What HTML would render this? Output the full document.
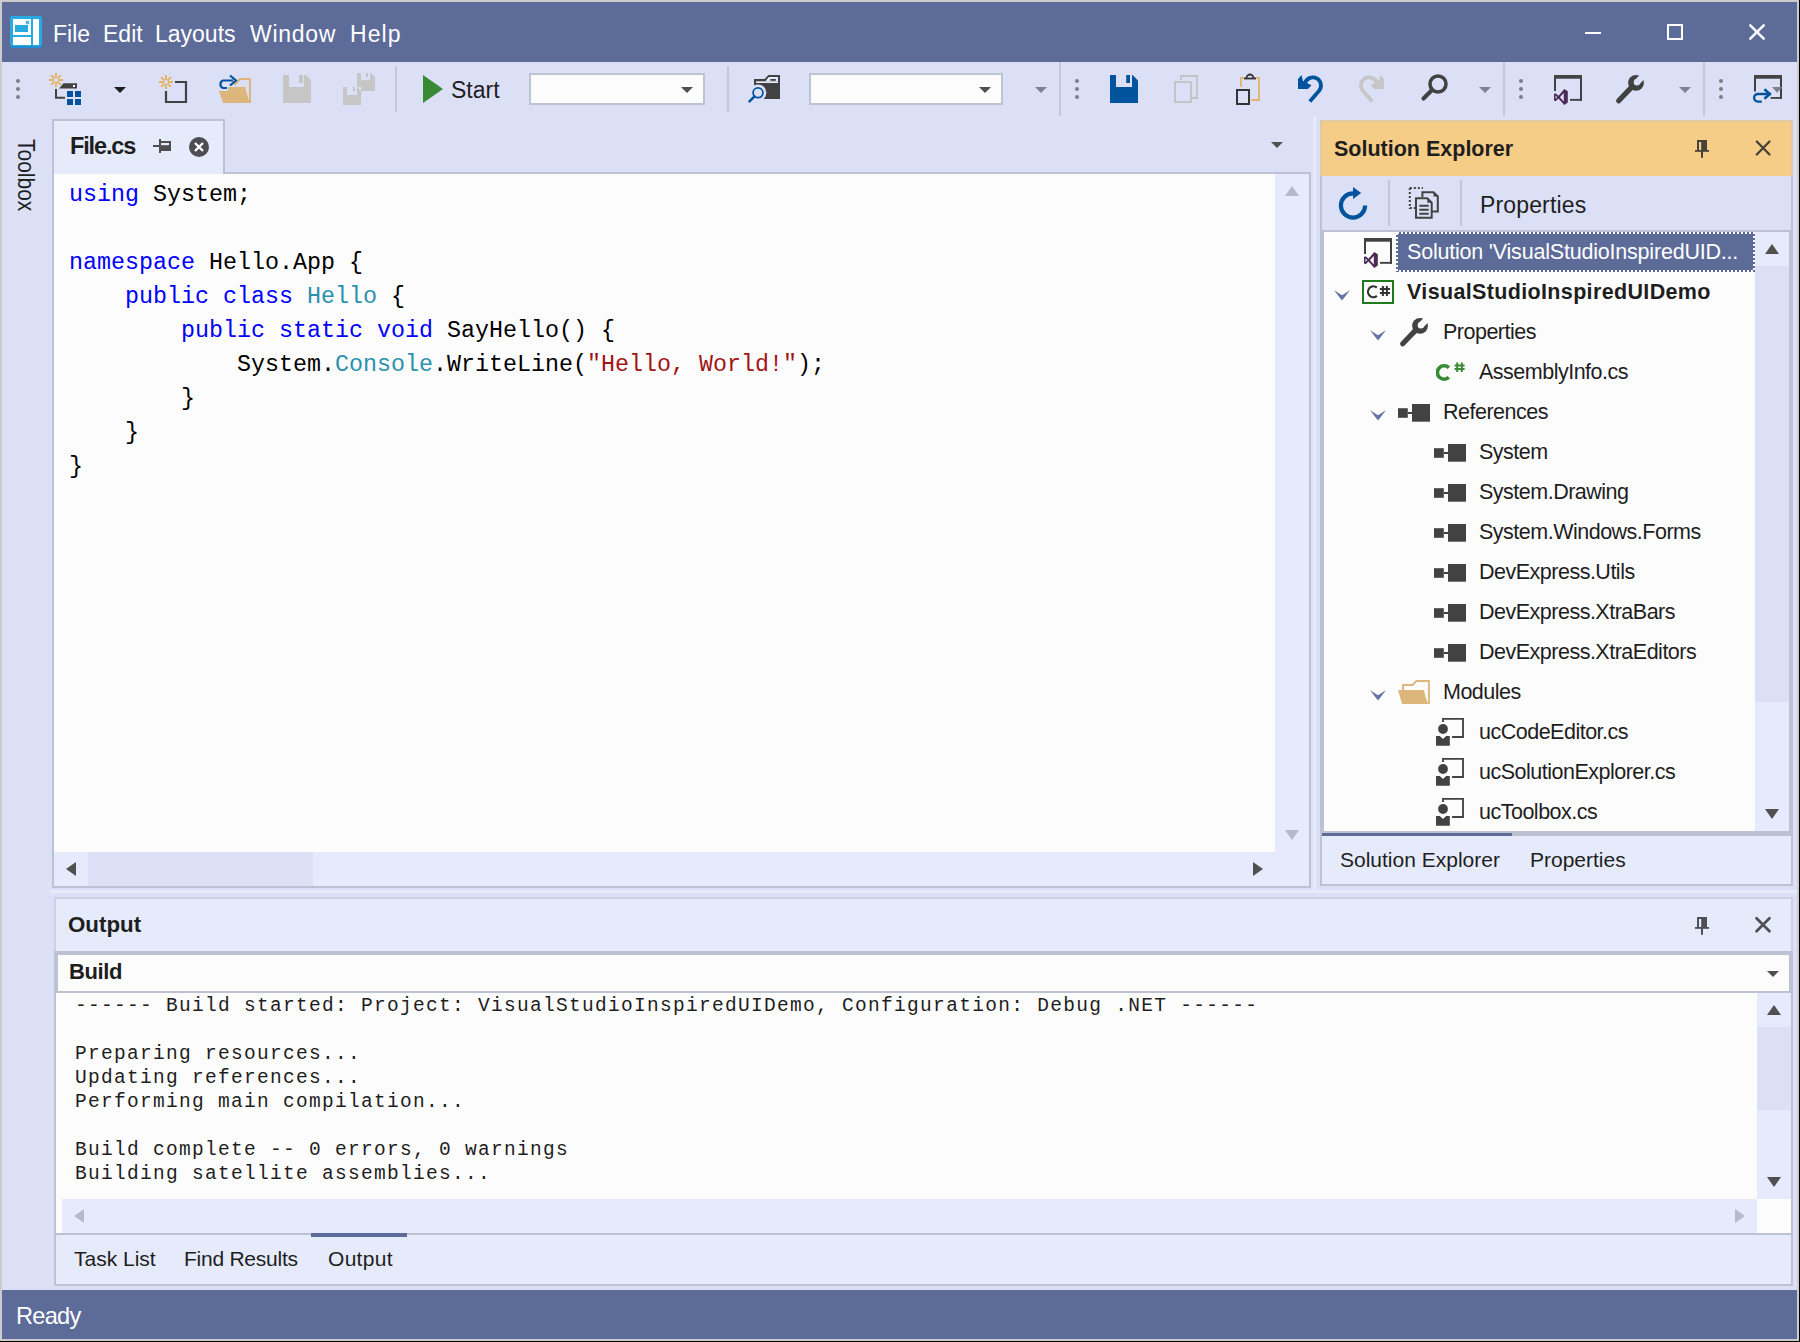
<!DOCTYPE html>
<html><head><meta charset="utf-8">
<style>
*{margin:0;padding:0;box-sizing:border-box}
html,body{width:1800px;height:1342px;overflow:hidden;background:#000}
body{position:relative;font-family:"Liberation Sans",sans-serif;color:#1e1e1e}
.a{position:absolute}
.t{position:absolute;white-space:pre;line-height:1}
#frame{left:0;top:0;width:1799px;height:1341px;background:#cbcbcb}
#win{left:2px;top:2px;width:1795px;height:1337px;background:#dce0f7}
#title{left:2px;top:2px;width:1795px;height:60px;background:#5d6b99}
.menu{color:#fff;font-size:23px;top:23px}
.sep{position:absolute;width:2px;background:#c2c7d6}
.dot{position:absolute;width:5px;height:5px;border-radius:50%;background:#7c7f88}
.combo{position:absolute;background:#fcfcfc;border:2px solid #bcc3d1}
.tri-d{position:absolute;width:0;height:0;border-left:6px solid transparent;border-right:6px solid transparent;border-top:6px solid #505050}
.border{background:#bcc2d2}
.code{font-family:"Liberation Mono",monospace;font-size:23.33px;color:#000}
.kw{color:#0000ff}.ty{color:#2b91af}.st{color:#a31515}
.out{font-family:"Liberation Mono",monospace;font-size:19.5px;letter-spacing:1.3px;color:#1e1e1e}
.tree{font-size:21.5px;letter-spacing:-0.5px;color:#1e1e1e}
</style></head><body>
<div id="frame" class="a"></div>
<div id="win" class="a"></div>
<div id="title" class="a"></div>

<!-- ============ TITLE BAR ============ -->
<svg class="a" style="left:10px;top:16px" width="32" height="32" viewBox="0 0 32 32">
  <rect x="0" y="0" width="32" height="32" rx="3" fill="#1f8ed0"/>
  <rect x="0" y="0" width="32" height="30" rx="3" fill="#29abe2"/>
  <rect x="3" y="3" width="18" height="16" fill="#fcfcfc"/>
  <rect x="5" y="9" width="13" height="7" fill="#29abe2"/>
  <rect x="3" y="21" width="18" height="8" fill="#fcfcfc"/>
  <rect x="23" y="3" width="6" height="26" fill="#fcfcfc"/>
  <path d="M16 5l3 3M19 5l-3 3" stroke="#29abe2" stroke-width="1.2"/>
</svg>
<div class="t menu" style="left:53px">File</div>
<div class="t menu" style="left:103px">Edit</div>
<div class="t menu" style="left:155px">Layouts</div>
<div class="t menu" style="left:250px;letter-spacing:0.7px">Window</div>
<div class="t menu" style="left:350px;letter-spacing:1.1px">Help</div>
<div class="a" style="left:1585px;top:32px;width:16px;height:2px;background:#fff"></div>
<div class="a" style="left:1667px;top:24px;width:16px;height:16px;border:2px solid #fff"></div>
<svg class="a" style="left:1747px;top:22px" width="20" height="20" viewBox="0 0 20 20"><path d="M3.3 3.3L16.7 16.7M16.7 3.3L3.3 16.7" stroke="#fff" stroke-width="2.5" stroke-linecap="round"/></svg>

<!-- ============ TOOLBAR ============ -->
<div class="a" style="left:16.0px;top:79.0px;width:4.2px;height:4.2px;border-radius:50%;background:#7c7f88"></div>
<div class="a" style="left:16.0px;top:87.0px;width:4.2px;height:4.2px;border-radius:50%;background:#7c7f88"></div>
<div class="a" style="left:16.0px;top:95.0px;width:4.2px;height:4.2px;border-radius:50%;background:#7c7f88"></div>
<svg class="a" style="left:0;top:0;overflow:visible" width="1800" height="120"><g stroke="#e3b467" stroke-width="2"><path d="M56 73V87M49 80H63M51.1 75.1L60.9 84.9M51.1 84.9L60.9 75.1"/></g><circle cx="56" cy="80" r="2" fill="#dce0f7"/><path d="M59 88.6L63.5 83.2H77V88.6z" fill="#424242"/><rect x="73" y="85" width="2" height="2" fill="#fff"/><path d="M56 89V97.8H65" fill="none" stroke="#424242" stroke-width="2"/><rect x="67" y="91" width="6" height="6" fill="#00539c"/><rect x="75" y="91" width="6" height="6" fill="#00539c"/><rect x="67" y="99" width="6" height="6" fill="#00539c"/><rect x="75" y="99" width="6" height="6" fill="#00539c"/><path d="M175 82H186V102H166V91" fill="none" stroke="#424242" stroke-width="2.2"/><g stroke="#e3b467" stroke-width="2"><path d="M166 75V89M159 82H173M161.1 77.1L170.9 86.9M161.1 86.9L170.9 77.1"/></g><circle cx="166" cy="82" r="2" fill="#dce0f7"/><path d="M234.5 85L240 79H250V103" fill="none" stroke="#dcb67a" stroke-width="2"/><path d="M219 91H228V87H245L249 101V103H223z" fill="#dcb67a"/><path d="M227 88H223A4 4 0 0 1 223 80.5H233" fill="none" stroke="#00539c" stroke-width="2.2"/><path d="M230 75.5L236 80.5L230 85.5" fill="none" stroke="#00539c" stroke-width="2.2"/><path d="M283 75H306L311 80V103H283z" fill="#c6c6c6"/><rect x="289" y="75" width="15" height="12" fill="#dce0f7"/><rect x="299" y="75" width="4" height="8" fill="#c6c6c6"/><path d="M357 73H371L375 77V91H361V87H357z" fill="#c6c6c6"/><rect x="361" y="73" width="9" height="7" fill="#dce0f7"/><rect x="366" y="73" width="2" height="4" fill="#c6c6c6"/><path d="M343 87H357L361 91V105H343z" fill="#c6c6c6"/><rect x="347" y="87" width="10" height="8" fill="#dce0f7"/><rect x="353" y="87" width="2" height="4" fill="#c6c6c6"/><path d="M423 75L443 89L423 103z" fill="#388a34"/><path d="M754 99V79H764.6L768.3 75H780V99z" fill="#424242"/><path d="M756 81.3H778V83H756z" fill="#e8ebfb"/><path d="M765.5 81.3L768.8 77H778V81.3z" fill="#e8ebfb"/><rect x="770.3" y="79" width="5.6" height="1.8" fill="#424242"/><circle cx="758" cy="92.8" r="8.4" fill="#dce0f7"/><rect x="746" y="99" width="10" height="8" fill="#dce0f7"/><circle cx="758" cy="92.8" r="4.9" fill="none" stroke="#00539c" stroke-width="1.8"/><path d="M754.5 96.3L749.5 101.3" stroke="#00539c" stroke-width="2.6" stroke-linecap="round"/><path d="M1110 75H1132.6L1138 80.4V103H1110z" fill="#00539c"/><rect x="1116" y="75" width="16" height="12" fill="#dce0f7"/><rect x="1126.2" y="75" width="3.8" height="8" fill="#00539c"/><path d="M1181 80V76H1197V98H1192" fill="none" stroke="#c3c3c3" stroke-width="1.8"/><rect x="1175" y="82" width="16" height="20" fill="none" stroke="#c3c3c3" stroke-width="1.8"/><path d="M1241 87V77.8H1245M1255 77.8H1259V100H1251" fill="none" stroke="#e3b467" stroke-width="1.8"/><path d="M1244 78.5H1256" stroke="#333" stroke-width="1.8"/><path d="M1246.5 78A3.5 3.5 0 0 1 1253.5 78" fill="none" stroke="#333" stroke-width="1.8"/><rect x="1237" y="90" width="12" height="14" fill="none" stroke="#333" stroke-width="2"/><path d="M1305.1 82.7A8.2 8.2 0 1 1 1319.1 90.8L1309.8 101.5" fill="none" stroke="#00539c" stroke-width="3.8"/><path d="M1298 79L1301.5 75L1303 81L1311.5 85.3L1308 89H1298z" fill="#00539c"/><path d="M1376.9 82.7A8.2 8.2 0 1 0 1362.9 90.8L1372.2 101.5" fill="none" stroke="#c6c6c6" stroke-width="3.8"/><path d="M1384 79L1380.5 75L1379 81L1370.5 85.3L1374 89H1384z" fill="#c6c6c6"/><circle cx="1438" cy="84" r="8" fill="none" stroke="#424242" stroke-width="3.6"/><path d="M1432 90L1423.5 98.5" stroke="#424242" stroke-width="4.2" stroke-linecap="round"/><g transform="translate(1548,71)"><rect x="6" y="4" width="28" height="3.7" fill="#424242"/><rect x="6" y="4" width="2" height="16" fill="#424242"/><rect x="32" y="4" width="2" height="25.8" fill="#424242"/><rect x="22" y="27.9" width="12" height="1.9" fill="#424242"/><path fill-rule="evenodd" fill="#4b2a59" d="M6 23L7.6 22.2L10.5 24.8L16.3 18L19.8 20.2V31.6L16.3 34L10.5 27.6L7.6 30.2L6 29.4Z M7.5 24.6L9.3 26.2L7.5 27.8Z M11.9 26.2L15.8 22V30.5Z"/></g><g transform="translate(1612,71)"><path d="M6.7 29.8L18.5 17.4" stroke="#424242" stroke-width="5.2" stroke-linecap="round"/><circle cx="24" cy="11.8" r="7.9" fill="#424242" mask="url(#wmask)"/></g><rect x="1754" y="75" width="28" height="3.7" fill="#424242"/><rect x="1754" y="75" width="2" height="16.5" fill="#424242"/><rect x="1780" y="75" width="2" height="23.8" fill="#424242"/><rect x="1770.6" y="97" width="11.4" height="1.8" fill="#424242"/><path d="M1772 87H1782.4L1777 92.8z" fill="#7f8290"/><path d="M1771 94H1757.9A3.8 3.8 0 0 0 1757.9 101.6H1761.8" fill="none" stroke="#00539c" stroke-width="2.3"/><path d="M1764.4 89.3L1769.8 94L1764.4 98.7" fill="none" stroke="#00539c" stroke-width="2.5"/></svg>
<div class="a" style="left:114px;top:87px;width:0;height:0;border-left:6.0px solid transparent;border-right:6.0px solid transparent;border-top:6px solid #1e1e1e"></div>
<div class="a" style="left:395px;top:66px;width:2px;height:46px;background:#c3c8d8"></div>
<div class="t" style="left:451px;top:79px;font-size:23px;color:#1e1e1e">Start</div>
<div class="combo" style="left:529px;top:73px;width:176px;height:32px"></div>
<div class="a" style="left:681px;top:87px;width:0;height:0;border-left:6.0px solid transparent;border-right:6.0px solid transparent;border-top:6px solid #505050"></div>
<div class="a" style="left:727px;top:66px;width:2px;height:46px;background:#c3c8d8"></div>
<div class="combo" style="left:809px;top:73px;width:194px;height:32px"></div>
<div class="a" style="left:979px;top:87px;width:0;height:0;border-left:6.0px solid transparent;border-right:6.0px solid transparent;border-top:6px solid #505050"></div>
<div class="a" style="left:1035px;top:87px;width:0;height:0;border-left:6.0px solid transparent;border-right:6.0px solid transparent;border-top:6px solid #7f8290"></div>
<div class="a" style="left:1059px;top:62px;width:2px;height:54px;background:#c3c8d8"></div>
<div class="a" style="left:1075.0px;top:79.0px;width:4.2px;height:4.2px;border-radius:50%;background:#7c7f88"></div>
<div class="a" style="left:1075.0px;top:87.0px;width:4.2px;height:4.2px;border-radius:50%;background:#7c7f88"></div>
<div class="a" style="left:1075.0px;top:95.0px;width:4.2px;height:4.2px;border-radius:50%;background:#7c7f88"></div>
<div class="a" style="left:1479px;top:87px;width:0;height:0;border-left:6.0px solid transparent;border-right:6.0px solid transparent;border-top:6px solid #7f8290"></div>
<div class="a" style="left:1503px;top:62px;width:2px;height:54px;background:#c3c8d8"></div>
<div class="a" style="left:1519.0px;top:79.0px;width:4.2px;height:4.2px;border-radius:50%;background:#7c7f88"></div>
<div class="a" style="left:1519.0px;top:87.0px;width:4.2px;height:4.2px;border-radius:50%;background:#7c7f88"></div>
<div class="a" style="left:1519.0px;top:95.0px;width:4.2px;height:4.2px;border-radius:50%;background:#7c7f88"></div>
<div class="a" style="left:1679px;top:87px;width:0;height:0;border-left:6.0px solid transparent;border-right:6.0px solid transparent;border-top:6px solid #7f8290"></div>
<div class="a" style="left:1703px;top:62px;width:2px;height:54px;background:#c3c8d8"></div>
<div class="a" style="left:1719.0px;top:79.0px;width:4.2px;height:4.2px;border-radius:50%;background:#7c7f88"></div>
<div class="a" style="left:1719.0px;top:87.0px;width:4.2px;height:4.2px;border-radius:50%;background:#7c7f88"></div>
<div class="a" style="left:1719.0px;top:95.0px;width:4.2px;height:4.2px;border-radius:50%;background:#7c7f88"></div>

<!-- ============ TOOLBOX ============ -->
<div class="t" style="left:15px;top:139px;font-size:23.2px;color:#1e1e1e;transform-origin:0 0;transform:translate(22px,0) rotate(90deg) scaleX(0.905)">Toolbox</div>

<!-- ============ DOCUMENT TAB + EDITOR ============ -->
<div class="a border" style="left:52px;top:172px;width:1259px;height:716px"></div>
<div class="a" style="left:54px;top:174px;width:1221px;height:678px;background:#fcfcfc"></div>
<div class="a border" style="left:52px;top:119px;width:173px;height:55px"></div>
<div class="a" style="left:54px;top:121px;width:169px;height:53px;background:#e6ebfc"></div>
<div class="t" style="left:70px;top:135px;font-size:23.5px;letter-spacing:-1.15px;font-weight:bold;color:#1e1e1e">File.cs</div>
<svg class="a" style="left:150px;top:136px" width="62" height="24" viewBox="150 136 62 24"><path d="M153 146H160" stroke="#4d4d52" stroke-width="2"/><rect x="159" y="139" width="2" height="14" fill="#4d4d52"/><rect x="161" y="141" width="10" height="10" fill="#4d4d52"/><rect x="161" y="143" width="8" height="2.2" fill="#e6ebfc"/><circle cx="199" cy="147" r="10" fill="#4d4d52"/><path d="M195 143L203 151M203 143L195 151" stroke="#fff" stroke-width="2.4"/></svg>

<div class="a" style="left:1275px;top:174px;width:34px;height:678px;background:#e6eafc"></div>
<div class="a" style="left:54px;top:852px;width:1221px;height:34px;background:#e6eafc"></div>
<div class="a" style="left:88px;top:852px;width:225px;height:34px;background:#dce0f7"></div>
<div class="a" style="left:1275px;top:852px;width:34px;height:34px;background:#e6eafc"></div>

<div class="a code" style="left:69px;top:178px;line-height:34px;white-space:pre"><span class="kw">using</span> System;

<span class="kw">namespace</span> Hello.App {
    <span class="kw">public</span> <span class="kw">class</span> <span class="ty">Hello</span> {
        <span class="kw">public</span> <span class="kw">static</span> <span class="kw">void</span> SayHello() {
            System.<span class="ty">Console</span>.WriteLine(<span class="st">"Hello, World!"</span>);
        }
    }
}</div>
<div class="a" style="left:1285px;top:186px;width:0;height:0;border-left:7px solid transparent;border-right:7px solid transparent;border-bottom:10px solid #b5bac8"></div>
<div class="a" style="left:1285px;top:830px;width:0;height:0;border-left:7px solid transparent;border-right:7px solid transparent;border-top:10px solid #b5bac8"></div>
<div class="a" style="left:66px;top:862px;width:0;height:0;border-top:7px solid transparent;border-bottom:7px solid transparent;border-right:10px solid #505050"></div>
<div class="a" style="left:1253px;top:862px;width:0;height:0;border-top:7px solid transparent;border-bottom:7px solid transparent;border-left:10px solid #505050"></div>
<div class="tri-d" style="left:1271px;top:142px"></div>


<!-- ============ SOLUTION EXPLORER ============ -->
<svg width="0" height="0" style="position:absolute"><defs><mask id="wmask" maskUnits="userSpaceOnUse" x="0" y="0" width="36" height="36"><rect x="0" y="0" width="36" height="36" fill="#fff"/><circle cx="24.9" cy="11.3" r="3.2" fill="#000"/><path d="M24.9 11.3L33 3.2" stroke="#000" stroke-width="6.2"/></mask></defs></svg>
<div class="a" style="left:1320px;top:120px;width:473px;height:766px;background:#bcc2d2"></div>
<div class="a" style="left:1320px;top:120px;width:473px;height:56px;background:#e3c9a3"></div>
<div class="a" style="left:1322px;top:122px;width:469px;height:54px;background:#f5cd86"></div>
<div class="t" style="left:1334px;top:139px;font-size:21.5px;font-weight:bold;color:#1e1e1e">Solution Explorer</div>
<svg class="a" style="left:1690px;top:136px" width="90" height="26" viewBox="1690 136 90 26"><path d="M1697 140H1707V150.2H1697Z" fill="#46413a"/><rect x="1699" y="142" width="2.2" height="8.2" fill="#f5cd86"/><rect x="1695" y="150" width="14" height="1.8" fill="#46413a"/><rect x="1701" y="151" width="2" height="6.8" fill="#46413a"/><path d="M1756.8 141.5L1769.5 154.5M1769.5 141.5L1756.8 154.5" stroke="#46413a" stroke-width="2.3" stroke-linecap="round"/></svg>
<div class="a" style="left:1322px;top:176px;width:469px;height:54px;background:#dce0f7"></div>
<div class="sep" style="left:1388px;top:180px;height:46px"></div>
<div class="sep" style="left:1460px;top:180px;height:46px"></div>
<svg class="a" style="left:1334px;top:182px" width="40" height="44" viewBox="1334 182 40 44"><path d="M1353 193.4A12.1 12.1 0 1 0 1365.1 205.5" fill="none" stroke="#00539c" stroke-width="4.2"/><path d="M1353 187L1361.2 193L1353 199z" fill="#00539c"/></svg>
<svg class="a" style="left:1404px;top:182px" width="40" height="44" viewBox="1404 182 40 44"><path d="M1409.8 188H1423M1409.8 188V209M1409.8 208H1415" fill="none" stroke="#424242" stroke-width="2" stroke-dasharray="2 2"/><path d="M1422.4 197V192.2H1433.5L1437.8 196.5V211.6H1432" fill="none" stroke="#424242" stroke-width="2"/><path d="M1433.5 192.2L1437.8 196.5H1433.5z" fill="#424242"/><path d="M1416 198.3H1427.3L1431.7 202.7V217.7H1416Z" fill="#dce0f7" stroke="#424242" stroke-width="2"/><path d="M1427.3 198.3L1431.7 202.7H1427.3z" fill="#424242"/><path d="M1419.3 205.8H1428.7M1419.3 209.8H1428.7M1419.3 213.8H1428.7" stroke="#424242" stroke-width="2"/></svg>
<div class="t" style="left:1480px;top:194px;font-size:23px;letter-spacing:0.15px;color:#1e1e1e">Properties</div>
<div class="a" style="left:1324px;top:232px;width:431px;height:599px;background:#fcfcfc"></div>
<div class="a" style="left:1755px;top:232px;width:34px;height:599px;background:#e6eafc"></div>
<div class="a" style="left:1755px;top:266px;width:34px;height:436px;background:#dce0f7"></div>
<div class="a" style="left:1765px;top:244px;width:0;height:0;border-left:7px solid transparent;border-right:7px solid transparent;border-bottom:10px solid #505050"></div>
<div class="a" style="left:1765px;top:809px;width:0;height:0;border-left:7px solid transparent;border-right:7px solid transparent;border-top:10px solid #505050"></div>
<svg class="a" style="left:1396px;top:232px" width="359" height="40" viewBox="0 0 359 40"><rect x="0" y="0" width="359" height="40" fill="#5d6b99"/><rect x="1" y="1" width="357" height="38" fill="none" stroke="#fff" stroke-width="2" stroke-dasharray="2 2"/></svg>
<svg class="a" style="left:1358px;top:234px" width="40" height="40" viewBox="0 0 40 40"><rect x="6" y="4" width="28" height="3.7" fill="#424242"/><rect x="6" y="4" width="2" height="16" fill="#424242"/><rect x="32" y="4" width="2" height="25.8" fill="#424242"/><rect x="22" y="27.9" width="12" height="1.9" fill="#424242"/><path fill-rule="evenodd" fill="#4b2a59" d="M6 23L7.6 22.2L10.5 24.8L16.3 18L19.8 20.2V31.6L16.3 34L10.5 27.6L7.6 30.2L6 29.4Z M7.5 24.6L9.3 26.2L7.5 27.8Z M11.9 26.2L15.8 22V30.5Z"/></svg>
<div class="t tree" style="left:1407px;top:241.5px;letter-spacing:-0.2px;color:#fff">Solution 'VisualStudioInspiredUID...</div>
<svg class="a" style="left:1334px;top:290px" width="16" height="11" viewBox="0 0 16 11"><path d="M0 0.3L8 5.2L16 0.3L8 10.5z" fill="#6672a2"/></svg>
<svg class="a" style="left:1362px;top:280px" width="32" height="24" viewBox="0 0 32 24"><rect x="1" y="1" width="30" height="22" fill="none" stroke="#207a1e" stroke-width="2"/><path d="M14.87 7.66A5.4 5.4 0 1 0 14.87 15.94" fill="none" stroke="#333" stroke-width="2.2"/><path d="M20.9 6V16M24.9 6V16M17.8 9H28M17.8 13H28" stroke="#333" stroke-width="2"/></svg>
<div class="t tree" style="left:1407px;top:281.5px;font-weight:bold;letter-spacing:0.35px;color:#1e1e1e">VisualStudioInspiredUIDemo</div>
<svg class="a" style="left:1370px;top:330px" width="16" height="11" viewBox="0 0 16 11"><path d="M0 0.3L8 5.2L16 0.3L8 10.5z" fill="#6672a2"/></svg>
<svg class="a" style="left:1396px;top:314px" width="36" height="36" viewBox="0 0 36 36"><path d="M6.7 29.8L18.5 17.4" stroke="#424242" stroke-width="5.2" stroke-linecap="round"/><circle cx="24" cy="11.8" r="7.9" fill="#424242" mask="url(#wmask)"/></svg>
<div class="t tree" style="left:1443px;top:321.5px;color:#1e1e1e">Properties</div>
<svg class="a" style="left:1436px;top:362px" width="30" height="22" viewBox="0 0 30 22"><path d="M12.84 5.76A6.7 6.7 0 1 0 12.84 15.24" fill="none" stroke="#388a34" stroke-width="3.6"/><path d="M21.2 0.5V10M25.8 0.5V10M18.6 3.6H28.6M18.6 7H28.6" stroke="#388a34" stroke-width="2"/></svg>
<div class="t tree" style="left:1479px;top:361.5px;color:#1e1e1e">AssemblyInfo.cs</div>
<svg class="a" style="left:1370px;top:410px" width="16" height="11" viewBox="0 0 16 11"><path d="M0 0.3L8 5.2L16 0.3L8 10.5z" fill="#6672a2"/></svg>
<svg class="a" style="left:1398px;top:404px" width="32" height="18" viewBox="0 0 32 18"><rect x="0" y="4.2" width="9.8" height="9.6" fill="#424242"/><rect x="9.8" y="8" width="4.2" height="2" fill="#424242"/><rect x="14" y="0" width="18" height="17.7" fill="#424242"/></svg>
<div class="t tree" style="left:1443px;top:401.5px;color:#1e1e1e">References</div>
<svg class="a" style="left:1434px;top:444px" width="32" height="18" viewBox="0 0 32 18"><rect x="0" y="4.2" width="9.8" height="9.6" fill="#424242"/><rect x="9.8" y="8" width="4.2" height="2" fill="#424242"/><rect x="14" y="0" width="18" height="17.7" fill="#424242"/></svg>
<div class="t tree" style="left:1479px;top:441.5px;color:#1e1e1e">System</div>
<svg class="a" style="left:1434px;top:484px" width="32" height="18" viewBox="0 0 32 18"><rect x="0" y="4.2" width="9.8" height="9.6" fill="#424242"/><rect x="9.8" y="8" width="4.2" height="2" fill="#424242"/><rect x="14" y="0" width="18" height="17.7" fill="#424242"/></svg>
<div class="t tree" style="left:1479px;top:481.5px;color:#1e1e1e">System.Drawing</div>
<svg class="a" style="left:1434px;top:524px" width="32" height="18" viewBox="0 0 32 18"><rect x="0" y="4.2" width="9.8" height="9.6" fill="#424242"/><rect x="9.8" y="8" width="4.2" height="2" fill="#424242"/><rect x="14" y="0" width="18" height="17.7" fill="#424242"/></svg>
<div class="t tree" style="left:1479px;top:521.5px;color:#1e1e1e">System.Windows.Forms</div>
<svg class="a" style="left:1434px;top:564px" width="32" height="18" viewBox="0 0 32 18"><rect x="0" y="4.2" width="9.8" height="9.6" fill="#424242"/><rect x="9.8" y="8" width="4.2" height="2" fill="#424242"/><rect x="14" y="0" width="18" height="17.7" fill="#424242"/></svg>
<div class="t tree" style="left:1479px;top:561.5px;color:#1e1e1e">DevExpress.Utils</div>
<svg class="a" style="left:1434px;top:604px" width="32" height="18" viewBox="0 0 32 18"><rect x="0" y="4.2" width="9.8" height="9.6" fill="#424242"/><rect x="9.8" y="8" width="4.2" height="2" fill="#424242"/><rect x="14" y="0" width="18" height="17.7" fill="#424242"/></svg>
<div class="t tree" style="left:1479px;top:601.5px;color:#1e1e1e">DevExpress.XtraBars</div>
<svg class="a" style="left:1434px;top:644px" width="32" height="18" viewBox="0 0 32 18"><rect x="0" y="4.2" width="9.8" height="9.6" fill="#424242"/><rect x="9.8" y="8" width="4.2" height="2" fill="#424242"/><rect x="14" y="0" width="18" height="17.7" fill="#424242"/></svg>
<div class="t tree" style="left:1479px;top:641.5px;color:#1e1e1e">DevExpress.XtraEditors</div>
<svg class="a" style="left:1370px;top:690px" width="16" height="11" viewBox="0 0 16 11"><path d="M0 0.3L8 5.2L16 0.3L8 10.5z" fill="#6672a2"/></svg>
<svg class="a" style="left:1394px;top:676px" width="40" height="32" viewBox="0 0 40 32"><path d="M9.05 14.3V9.05H18.6L22.4 5H34.9V27" fill="none" stroke="#dcb67a" stroke-width="1.9"/><path d="M4.05 14.1H29.8L33.1 26V27.9H35.9V27.9H8.1Z" fill="#dcb67a"/><rect x="33" y="26" width="2.9" height="1.9" fill="#dcb67a"/></svg>
<div class="t tree" style="left:1443px;top:681.5px;color:#1e1e1e">Modules</div>
<svg class="a" style="left:1432px;top:714px" width="36" height="36" viewBox="0 0 36 36"><path d="M11 7.9V4.9H31V23H20.1" fill="none" stroke="#424242" stroke-width="1.85"/><circle cx="11" cy="15" r="4.9" fill="#424242"/><path d="M4 22H7.8L11 25.1L14.1 22H17.8V31.8H4Z" fill="#424242"/></svg>
<div class="t tree" style="left:1479px;top:721.5px;color:#1e1e1e">ucCodeEditor.cs</div>
<svg class="a" style="left:1432px;top:754px" width="36" height="36" viewBox="0 0 36 36"><path d="M11 7.9V4.9H31V23H20.1" fill="none" stroke="#424242" stroke-width="1.85"/><circle cx="11" cy="15" r="4.9" fill="#424242"/><path d="M4 22H7.8L11 25.1L14.1 22H17.8V31.8H4Z" fill="#424242"/></svg>
<div class="t tree" style="left:1479px;top:761.5px;color:#1e1e1e">ucSolutionExplorer.cs</div>
<svg class="a" style="left:1432px;top:794px" width="36" height="36" viewBox="0 0 36 36"><path d="M11 7.9V4.9H31V23H20.1" fill="none" stroke="#424242" stroke-width="1.85"/><circle cx="11" cy="15" r="4.9" fill="#424242"/><path d="M4 22H7.8L11 25.1L14.1 22H17.8V31.8H4Z" fill="#424242"/></svg>
<div class="t tree" style="left:1479px;top:801.5px;color:#1e1e1e">ucToolbox.cs</div>
<div class="a" style="left:1322px;top:836px;width:469px;height:48px;background:#e6ebfc"></div>
<div class="a" style="left:1322px;top:833px;width:190px;height:3px;background:#5d6b99"></div>
<div class="t" style="left:1340px;top:849px;font-size:21px;color:#1e1e1e">Solution Explorer</div>
<div class="t" style="left:1530px;top:849px;font-size:21px;color:#1e1e1e">Properties</div>

<!-- ============ OUTPUT ============ -->
<div class="a" style="left:1313px;top:116px;width:3px;height:777px;background:#e6eafc"></div>
<div class="a" style="left:50px;top:890px;width:1747px;height:3px;background:#e6eafc"></div>
<div class="a" style="left:54px;top:897px;width:1739px;height:389px;background:#bcc2d2"></div>
<div class="a" style="left:54px;top:897px;width:1739px;height:54px;background:#ccd2e4"></div>
<div class="a" style="left:56px;top:899px;width:1735px;height:52px;background:#e6ebfc"></div>
<div class="t" style="left:68px;top:914px;font-size:22.3px;font-weight:bold;color:#1e1e1e">Output</div>
<svg class="a" style="left:1690px;top:912px" width="90" height="26" viewBox="1690 912 90 26"><path d="M1697 917H1707V927.2H1697Z" fill="#4d4e56"/><rect x="1699" y="919" width="2.2" height="8.2" fill="#e6ebfc"/><rect x="1695" y="927" width="14" height="1.8" fill="#4d4e56"/><rect x="1701" y="928" width="2" height="6.8" fill="#4d4e56"/><path d="M1756.5 918.3L1769.5 931.3M1769.5 918.3L1756.5 931.3" stroke="#4d4e56" stroke-width="2.7" stroke-linecap="round"/></svg>
<div class="a" style="left:54px;top:951px;width:1739px;height:42px;background:#bcc2d2"></div>
<div class="a" style="left:58px;top:955px;width:1731px;height:36px;background:#fcfcfc"></div>
<div class="t" style="left:69px;top:961px;font-size:22px;letter-spacing:-0.4px;font-weight:bold;color:#1e1e1e">Build</div>
<div class="tri-d" style="left:1767px;top:971px"></div>
<div class="a" style="left:56px;top:993px;width:1735px;height:240px;background:#fcfcfc"></div>
<div class="a out" style="left:75px;top:994px;line-height:24px;white-space:pre">------ Build started: Project: VisualStudioInspiredUIDemo, Configuration: Debug .NET ------

Preparing resources...
Updating references...
Performing main compilation...

Build complete -- 0 errors, 0 warnings
Building satellite assemblies...</div>
<div class="a" style="left:1757px;top:993px;width:34px;height:206px;background:#e6eafc"></div>
<div class="a" style="left:1757px;top:1027px;width:34px;height:83px;background:#dce0f7"></div>
<div class="a" style="left:1767px;top:1005px;width:0;height:0;border-left:7px solid transparent;border-right:7px solid transparent;border-bottom:10px solid #505050"></div>
<div class="a" style="left:1767px;top:1177px;width:0;height:0;border-left:7px solid transparent;border-right:7px solid transparent;border-top:10px solid #505050"></div>
<div class="a" style="left:62px;top:1199px;width:1695px;height:34px;background:#e6eafc"></div>
<div class="a" style="left:74px;top:1209px;width:0;height:0;border-top:7px solid transparent;border-bottom:7px solid transparent;border-right:10px solid #b5bac8"></div>
<div class="a" style="left:1735px;top:1209px;width:0;height:0;border-top:7px solid transparent;border-bottom:7px solid transparent;border-left:10px solid #b5bac8"></div>
<div class="a" style="left:56px;top:1235px;width:1735px;height:49px;background:#e6ebfc"></div>
<div class="a" style="left:311px;top:1233px;width:96px;height:4px;background:#5d6b99"></div>
<div class="t" style="left:74px;top:1248px;font-size:21px;color:#1e1e1e">Task List</div>
<div class="t" style="left:184px;top:1248px;font-size:21px;letter-spacing:-0.25px;color:#1e1e1e">Find Results</div>
<div class="t" style="left:328px;top:1248px;font-size:21px;letter-spacing:0.3px;color:#1e1e1e">Output</div>
<div class="a" style="left:1787px;top:1313px;width:4px;height:4px;border-radius:50%;background:#c6cad8"></div>
<div class="a" style="left:1779px;top:1321px;width:4px;height:4px;border-radius:50%;background:#c6cad8"></div>
<div class="a" style="left:1787px;top:1321px;width:4px;height:4px;border-radius:50%;background:#c6cad8"></div>
<div class="a" style="left:1771px;top:1329px;width:4px;height:4px;border-radius:50%;background:#c6cad8"></div>
<div class="a" style="left:1779px;top:1329px;width:4px;height:4px;border-radius:50%;background:#c6cad8"></div>
<div class="a" style="left:1787px;top:1329px;width:4px;height:4px;border-radius:50%;background:#c6cad8"></div>

<!-- ============ STATUS BAR ============ -->
<div class="a" style="left:2px;top:1290px;width:1795px;height:49px;background:#5d6b99"></div>
<div class="t" style="left:16px;top:1305px;font-size:23.6px;letter-spacing:-0.75px;color:#fff">Ready</div>

</body></html>
